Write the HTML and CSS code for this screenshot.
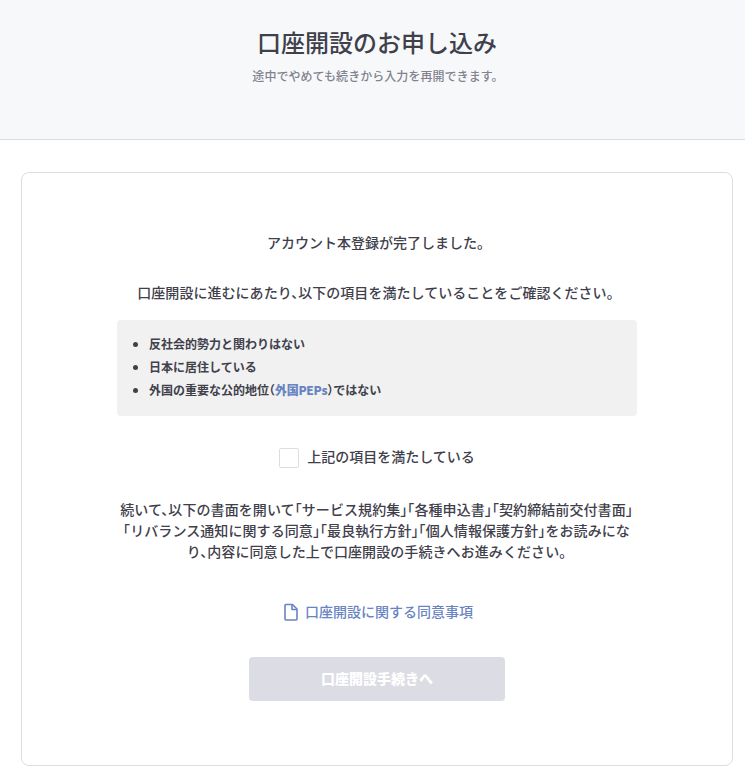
FILE: index.html
```
<!DOCTYPE html>
<html lang="ja">
<head>
    <meta charset="UTF-8">
    <meta name="viewport" content="width=device-width, initial-scale=1.0">
    <title>口座開設のお申し込み</title>
    <link rel="stylesheet" href="styles.css">
</head>
<body>
    <header class="page-header">
        <h1>口座開設のお申し込み</h1>
        <p>途中でやめても続きから入力を再開できます。</p>
    </header>

    <main class="card">
        <p class="lead">アカウント本登録が完了しました。</p>
        <p class="lead">口座開設に進むにあたり、以下の項目を満たしていることをご確認ください。</p>

        <ul class="conditions">
            <li>反社会的勢力と関わりはない</li>
            <li>日本に居住している</li>
            <li>外国の重要な公的地位（<a href="#">外国PEPs</a>）ではない</li>
        </ul>

        <label class="check">
            <input type="checkbox">
            <span>上記の項目を満たしている</span>
        </label>

        <p class="guide">
            続いて、以下の書面を開いて「サービス規約集」「各種申込書」「契約締結前交付書面」<br>
            「リバランス通知に関する同意」「最良執行方針」「個人情報保護方針」をお読みにな<br>
            り、内容に同意した上で口座開設の手続きへお進みください。
        </p>

        <a class="doc-link" href="#">
            <svg width="14" height="18" viewBox="0 0 14 18" fill="none" stroke="currentColor" stroke-width="1.6" stroke-linejoin="round">
                <path d="M1 2.500v13.500q0 1 1 1h10q1 0 1-1V6L8.500 1.500H2q-1 0-1 1z"/>
                <path d="M8 1.500v5h5"/>
            </svg>
            <span>口座開設に関する同意事項</span>
        </a>

        <button class="submit" type="button" disabled>口座開設手続きへ</button>
    </main>
</body>
</html>
```

FILE: styles.css
```
* {
    box-sizing: border-box;
}
body {
    margin: 0;
    background-color: #fff;
    color: #40404b;
    font-family: "Noto Sans CJK JP", sans-serif;
    font-size: 14px;
    font-weight: 500;
    line-height: 21px;
    font-feature-settings: "halt";
}
h1, p, ul {
    margin: 0;
}
a {
    color: #6884c3;
    text-decoration: none;
}
.page-header {
    height: 140px;
    padding-top: 24px;
    padding-left: 9px;
    background-color: #f7f8fa;
    border-bottom: 1px solid #dcdce4;
    text-align: center;
}
.page-header h1 {
    font-size: 24px;
    font-weight: 500;
    line-height: 36px;
}
.page-header p {
    margin-top: 7px;
    padding-right: 4px;
    color: #82828f;
    font-size: 12px;
    letter-spacing: 0.05px;
    line-height: 18px;
}
.card {
    display: flex;
    flex-direction: column;
    align-items: center;
    width: 712px;
    height: 594px;
    margin: 32px 0 0 21px;
    padding-top: 59px;
    border: 1px solid #dcdce4;
    border-radius: 8px;
}
.lead {
    padding-right: 3px;
}
.lead + .lead {
    margin-top: 29px;
    letter-spacing: 0.04px;
}
.conditions {
    width: 520px;
    height: 96px;
    margin-top: 17px;
    padding: 12px 16px 13px 32px;
    background-color: #f1f1f1;
    border-radius: 4px;
    font-size: 12px;
    font-weight: 700;
    line-height: 23px;
}
.conditions a {
    font-weight: 900;
    letter-spacing: -0.3px;
}
.check {
    display: flex;
    align-items: center;
    gap: 8px;
    margin-top: 31px;
}
.check input {
    appearance: none;
    width: 20px;
    height: 20px;
    margin: 0;
    border: 1px solid #dcdce4;
    border-radius: 2px;
}
.check span {
    margin-top: -1px;
    padding-bottom: 1px;
}
.guide {
    margin-top: 31px;
    padding-right: 1px;
    letter-spacing: 0.08px;
    text-align: center;
    white-space: nowrap;
}
.doc-link {
    display: flex;
    align-items: center;
    gap: 7px;
    margin-top: 39px;
    padding-left: 3px;
}
.doc-link svg {
    margin-top: 1px;
}
.submit {
    width: 256px;
    height: 44px;
    margin-top: 35px;
    padding: 0 0 2px;
    border: none;
    border-radius: 4px;
    background-color: #dcdce4;
    color: #fff;
    font: inherit;
    font-weight: 900;
}
```
